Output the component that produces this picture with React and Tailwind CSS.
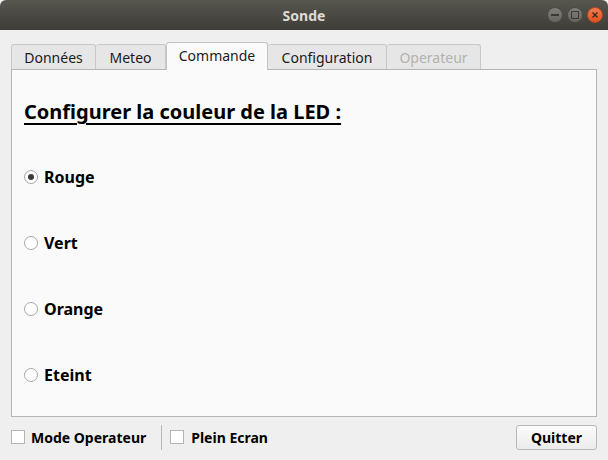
import React from "react";

const font = { fontFamily: '"Noto Sans", "DejaVu Sans", sans-serif' };

export default function App() {
  const tabs = [
    { label: "Données", w: "w-[85px]" },
    { label: "Meteo", w: "w-[70px]" },
    { label: "Commande", w: "w-[102px]", active: true },
    { label: "Configuration", w: "w-[119px]" },
    { label: "Operateur", w: "w-[94px]", disabled: true },
  ];
  const colors = ["Rouge", "Vert", "Orange", "Eteint"];

  return (
    <div className="w-[608px] h-[460px] flex flex-col bg-[#efefef] overflow-hidden" style={font}>
      {/* Title bar */}
      <div className="relative h-[30px] rounded-t-[6px] bg-gradient-to-b from-[#57554e] to-[#3e3d39] flex items-center justify-center">
        <span className="text-[14px] font-bold text-[#dfdbd2]">Sonde</span>
        <div className="absolute right-[5px] top-[7px] flex gap-[4px]">
          <WinBtn>
            <div className="w-[8px] h-[2px] bg-[#3a3935]" />
          </WinBtn>
          <WinBtn>
            <div className="w-[8px] h-[8px] border-[1.5px] border-[#3a3935]" />
          </WinBtn>
          <div className="w-[16px] h-[16px] rounded-full bg-gradient-to-b from-[#f37a4e] to-[#e0531f] border border-[#b9461d] flex items-center justify-center">
            <svg width="8" height="8" viewBox="0 0 8 8">
              <path d="M1.5 1.5 L6.5 6.5 M6.5 1.5 L1.5 6.5" stroke="#3a2a22" strokeWidth="1.4" />
            </svg>
          </div>
        </div>
      </div>

      {/* Body */}
      <div className="flex-1 flex flex-col px-[11px] pt-[11px]">
        <div className="flex items-end h-[28px]">
          {tabs.map((t) =>
            t.active ? (
              <div
                key={t.label}
                className={`${t.w} h-[28px] -mb-px relative z-10 bg-[#fafafa] border border-b-0 border-[#c4c4c4] rounded-t-[3px] flex items-center justify-center text-[14px] text-[#1a1a1a] pb-[2px]`}
              >
                {t.label}
              </div>
            ) : (
              <div
                key={t.label}
                className={`${t.w} h-[25px] bg-[#e6e6e6] border border-b-0 border-l-0 first:border-l border-[#c8c8c8] rounded-t-[3px] flex items-center justify-center text-[14px] ${
                  t.disabled ? "text-[#b2b2b2]" : "text-[#1a1a1a]"
                }`}
              >
                {t.label}
              </div>
            )
          )}
        </div>

        <div className="h-[348px] border border-[#b5b5b5] bg-[#fafafa] px-[12px] pt-[29px]">
          <h1 className="text-[20px] font-bold underline underline-offset-[4px] decoration-[2px] text-black leading-[26px]">
            Configurer la couleur de la LED :
          </h1>
          <div className="mt-[41px] flex flex-col gap-[44px]">
            {colors.map((c, i) => (
              <div key={c} className="flex items-center gap-[6px] h-[22px]">
                <div className="w-[14px] h-[14px] rounded-full border border-[#a9a9a9] bg-white flex items-center justify-center">
                  {i === 0 && <div className="w-[6px] h-[6px] rounded-full bg-[#3c3c3c]" />}
                </div>
                <span className="text-[16px] font-bold text-black">{c}</span>
              </div>
            ))}
          </div>
        </div>

        {/* Bottom bar */}
        <div className="flex-1 flex items-center pb-[3px]">
          <div className="flex items-center gap-[6px]">
            <div className="w-[14px] h-[14px] border border-[#b5b5b5] bg-white" />
            <span className="text-[14px] font-bold text-black">Mode Operateur</span>
          </div>
          <div className="w-px h-[25px] bg-[#b8b8b8] ml-[15px] mr-[8px]" />
          <div className="flex items-center gap-[7px]">
            <div className="w-[14px] h-[14px] border border-[#b5b5b5] bg-white" />
            <span className="text-[14px] font-bold text-black">Plein Ecran</span>
          </div>
          <button className="ml-auto w-[81px] h-[25px] rounded-[3px] border border-[#b8b8b8] bg-gradient-to-b from-[#fbfbfb] to-[#ececec] text-[14px] font-bold text-black flex items-center justify-center">
            Quitter
          </button>
        </div>
      </div>
    </div>
  );
}

function WinBtn({ children }) {
  return (
    <div className="w-[16px] h-[16px] rounded-full bg-gradient-to-b from-[#807e77] to-[#66645e] border border-[#4a4944] flex items-center justify-center">
      {children}
    </div>
  );
}
